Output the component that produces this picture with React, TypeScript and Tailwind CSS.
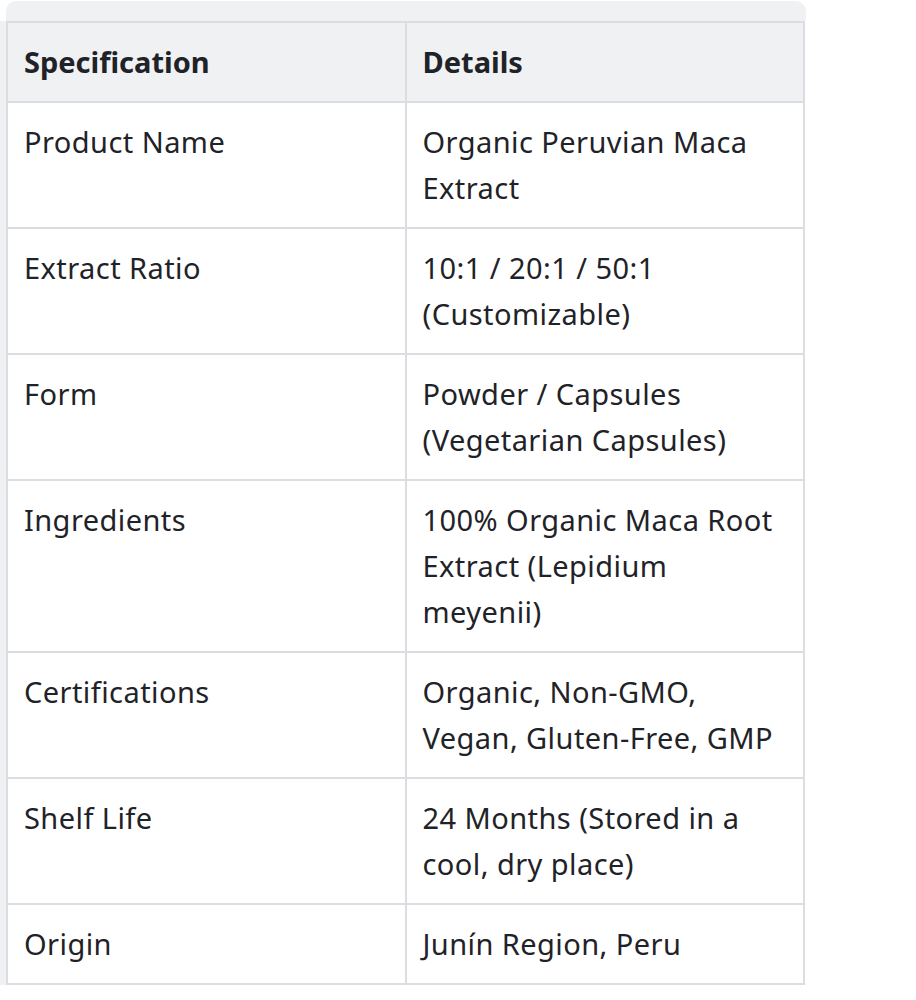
const rows: [string, string][] = [
  ["Product Name", "Organic Peruvian Maca Extract"],
  ["Extract Ratio", "10:1 / 20:1 / 50:1 (Customizable)"],
  ["Form", "Powder / Capsules (Vegetarian Capsules)"],
  ["Ingredients", "100% Organic Maca Root Extract (Lepidium meyenii)"],
  ["Certifications", "Organic, Non-GMO, Vegan, Gluten-Free, GMP"],
  ["Shelf Life", "24 Months (Stored in a cool, dry place)"],
  ["Origin", "Junín Region, Peru"],
];

export default function App() {
  return (
    <div
      className="w-[916px] h-[1000px] bg-white text-[#1f2328] overflow-hidden"
      style={{ fontFamily: '"Noto Sans", "Open Sans", sans-serif' }}
    >
      {/* scroll wrapper top */}
      <div className="mt-px ml-[6px] w-[800px] h-[20px] bg-[#f0f1f3] rounded-t-[10px]" />

      <div className="flex">
        <div className="w-[6px] bg-[#f0f1f3]" />
        <table className="w-[799px] table-fixed border-collapse text-[29px] leading-[46px]">
          <thead>
            <tr className="bg-[#f0f1f3]">
              <th className="w-1/2 border-2 border-[#dcdde1] px-4 py-4 text-left font-bold">
                Specification
              </th>
              <th className="w-1/2 border-2 border-[#dcdde1] px-4 py-4 text-left font-bold">
                Details
              </th>
            </tr>
          </thead>
          <tbody>
            {rows.map(([spec, detail]) => (
              <tr key={spec}>
                <td className="border-2 border-[#dcdde1] px-4 py-4 align-top tracking-[0.015em]">
                  {spec}
                </td>
                <td className="border-2 border-[#dcdde1] px-4 py-4 align-top tracking-[0.015em]">
                  {detail}
                </td>
              </tr>
            ))}
          </tbody>
        </table>
      </div>
    </div>
  );
}
